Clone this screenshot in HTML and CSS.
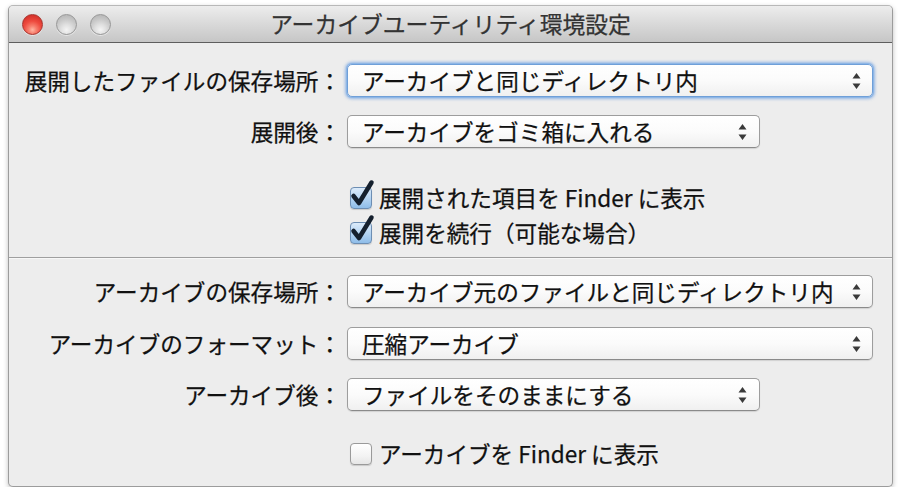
FILE: index.html
```html
<!DOCTYPE html>
<html lang="ja">
<head>
<meta charset="utf-8">
<title>アーカイブユーティリティ環境設定</title>
<link rel="stylesheet" href="styles.css">
</head>
<body>
<div class="window">
  <div class="titlebar">
    <div class="lights">
      <span class="light red"></span>
      <span class="light gray"></span>
      <span class="light gray"></span>
    </div>
    <div class="title">アーカイブユーティリティ環境設定</div>
    <div></div>
  </div>
  <div class="content">
    <div class="section first">
      <div class="row r1">
        <div class="label">展開したファイルの保存場所：</div>
        <div class="popup wide focused"><span class="ptext">アーカイブと同じディレクトリ内</span><svg class="arrows" width="9" height="18" viewBox="0 0 9 18"><path d="M4.5 1 L8.5 6.5 L0.5 6.5 Z M4.5 17 L8.5 11.5 L0.5 11.5 Z" fill="#3a3a3a"/></svg></div>
      </div>
      <div class="row r2">
        <div class="label">展開後：</div>
        <div class="popup narrow"><span class="ptext">アーカイブをゴミ箱に入れる</span><svg class="arrows" width="9" height="18" viewBox="0 0 9 18"><path d="M4.5 1 L8.5 6.5 L0.5 6.5 Z M4.5 17 L8.5 11.5 L0.5 11.5 Z" fill="#3a3a3a"/></svg></div>
      </div>
      <div class="row cbrow cb1">
        <div></div>
        <label class="check"><span class="box checked"><svg class="tick" width="26" height="30" viewBox="0 0 26 30"><path d="M4.5 17 L10 24 L22.5 3.5" fill="none" stroke="#15202e" stroke-width="4.5" stroke-linecap="round" stroke-linejoin="round"/></svg></span><span class="ctext">展開された項目を Finder に表示</span></label>
      </div>
      <div class="row cbrow">
        <div></div>
        <label class="check"><span class="box checked"><svg class="tick" width="26" height="30" viewBox="0 0 26 30"><path d="M4.5 17 L10 24 L22.5 3.5" fill="none" stroke="#15202e" stroke-width="4.5" stroke-linecap="round" stroke-linejoin="round"/></svg></span><span class="ctext">展開を続行（可能な場合）</span></label>
      </div>
    </div>
    <div class="separator"></div>
    <div class="section second">
      <div class="row r3">
        <div class="label">アーカイブの保存場所：</div>
        <div class="popup wide"><span class="ptext">アーカイブ元のファイルと同じディレクトリ内</span><svg class="arrows" width="9" height="18" viewBox="0 0 9 18"><path d="M4.5 1 L8.5 6.5 L0.5 6.5 Z M4.5 17 L8.5 11.5 L0.5 11.5 Z" fill="#3a3a3a"/></svg></div>
      </div>
      <div class="row r4">
        <div class="label">アーカイブのフォーマット：</div>
        <div class="popup wide"><span class="ptext">圧縮アーカイブ</span><svg class="arrows" width="9" height="18" viewBox="0 0 9 18"><path d="M4.5 1 L8.5 6.5 L0.5 6.5 Z M4.5 17 L8.5 11.5 L0.5 11.5 Z" fill="#3a3a3a"/></svg></div>
      </div>
      <div class="row r5">
        <div class="label">アーカイブ後：</div>
        <div class="popup narrow"><span class="ptext">ファイルをそのままにする</span><svg class="arrows" width="9" height="18" viewBox="0 0 9 18"><path d="M4.5 1 L8.5 6.5 L0.5 6.5 Z M4.5 17 L8.5 11.5 L0.5 11.5 Z" fill="#3a3a3a"/></svg></div>
      </div>
      <div class="row cbrow cb3">
        <div></div>
        <label class="check"><span class="box"></span><span class="ctext">アーカイブを Finder に表示</span></label>
      </div>
    </div>
  </div>
</div>
</body>
</html>
```

FILE: styles.css
```css
html, body {
  margin: 0;
  padding: 0;
  background: #ffffff;
}
body {
  font-family: "Noto Sans CJK JP", "Noto Sans", sans-serif;
  color: #111111;
  -webkit-text-stroke: 0.25px #111111;
}
.window {
  margin: 5px 0 0 8px;
  width: 885px;
  height: 482px;
  box-sizing: border-box;
  border: 1px solid #9c9c9c;
  border-top-color: #b8b8b8;
  border-radius: 5px;
  background: #ededed;
  box-shadow: 0 2px 5px rgba(0,0,0,0.25);
  overflow: hidden;
}
.titlebar {
  height: 37px;
  box-sizing: border-box;
  display: grid;
  grid-template-columns: 1fr auto 1fr;
  align-items: center;
  background: linear-gradient(#ededed, #d9d9d9 50%, #c6c6c6);
  border-bottom: 1px solid #5e5e5e;
  border-top-left-radius: 4px;
  border-top-right-radius: 4px;
}
.lights {
  display: flex;
  gap: 13px;
  padding-left: 13px;
  padding-top: 1px;
}
.light {
  width: 21px;
  height: 21px;
  border-radius: 50%;
  box-sizing: border-box;
}
.light.red {
  border: 1px solid #a8332d;
  background: radial-gradient(circle at 50% 78%, #ffb7a3 0, #f77f6e 22%, #ee4a3e 50%, #d3302a 85%);
  box-shadow: 0 1px 0 rgba(255,255,255,0.5);
}
.light.gray {
  border: 1px solid #979797;
  background: radial-gradient(circle at 50% 78%, #f4f4f4 0, #e0e0e0 30%, #c8c8c8 60%, #b4b4b4 90%);
  box-shadow: 0 1px 0 rgba(255,255,255,0.5);
}
.title {
  font-size: 22.8px;
  line-height: 36px;
  color: #333333;
  -webkit-text-stroke: 0.25px #333333;
  white-space: nowrap;
}
.section.first {
  padding-top: 21px;
}
.section.second {
  padding-top: 16px;
}
.row {
  display: grid;
  grid-template-columns: 332px auto;
  column-gap: 6px;
  align-items: center;
}
.r2 { margin-top: 18px; }
.r4 { margin-top: 19px; }
.r5 { margin-top: 18px; }
.cbrow { height: 35px; }
.cb1 { margin-top: 32px; }
.cb3 { margin-top: 25px; }
.label {
  font-size: 22.6px;
  line-height: 33px;
  text-align: right;
  white-space: nowrap;
}
.popup {
  height: 33px;
  box-sizing: border-box;
  border: 1px solid #9d9d9d;
  border-bottom-color: #8a8a8a;
  border-radius: 5px;
  background: linear-gradient(#ffffff, #fbfbfb 50%, #f0f0f0);
  box-shadow: 0 1px 1px rgba(0,0,0,0.12);
  display: flex;
  align-items: center;
  justify-content: space-between;
  padding: 0 11px 0 14px;
}
.popup.wide { width: 526px; }
.popup.narrow { width: 413px; padding-right: 12px; }
.popup.focused {
  border-color: #6f9fd8;
  box-shadow: 0 0 0 1px #8db6e6, 0 0 3px 2px rgba(110,160,225,0.7);
}
.ptext {
  font-size: 22.6px;
  line-height: 31px;
  white-space: nowrap;
}
.arrows { display: block; }
.separator {
  margin-top: 7px;
  height: 0;
  border-top: 1px solid #9f9f9f;
  border-bottom: 1px solid #f7f7f7;
}
.check {
  display: flex;
  align-items: center;
  gap: 7px;
  padding-left: 3px;
}
.box {
  position: relative;
  width: 22px;
  height: 22px;
  box-sizing: border-box;
  border: 1px solid #9a9a9a;
  border-radius: 4px;
  background: linear-gradient(#ffffff, #f3f3f3 60%, #e6e6e6);
  box-shadow: 0 1px 1px rgba(0,0,0,0.15);
}
.box.checked {
  border-color: #6d8eb3;
  background: linear-gradient(#dcebfa, #b6d5f3 50%, #8fbde9);
}
.tick {
  position: absolute;
  left: -2px;
  top: -9px;
}
.ctext {
  font-size: 22.6px;
  line-height: 33px;
  white-space: nowrap;
}
```
